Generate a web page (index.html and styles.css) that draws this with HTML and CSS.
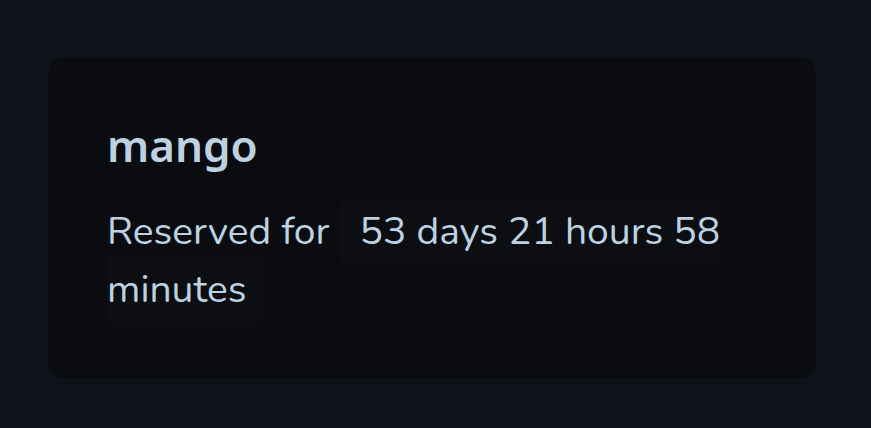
FILE: index.html
```html
<!DOCTYPE html>
<html lang="en">
<head>
    <meta charset="UTF-8">
    <meta name="viewport" content="width=device-width, initial-scale=1.0">
    <title>mango</title>
    <link rel="stylesheet" href="styles.css">
</head>
<body>
    <main class="page">
        <section class="card">
            <h1 class="card-title">mango</h1>
            <p class="card-text">Reserved for <span class="duration">53 days 21 hours 58 minutes</span></p>
        </section>
    </main>
</body>
</html>
```

FILE: styles.css
```css
*{
    box-sizing: border-box;
    margin:0;
    padding:0;
}
body{
    background:#0e1219;
    color:#bcd2e2;
    font-family: 'Nunito', sans-serif;
}
.page{
    padding:57px 48px;
}
.card{
    width:768px;
    min-height:322px;
    background:#0a0c0f;
    border-radius:18px;
    padding:62px 59px 40px;
}
.card-title{
    font-family: 'Noto Sans', sans-serif;
    font-size:44px;
    font-weight:600;
    line-height:1.2;
    margin-bottom:31px;
}
.card-text{
    font-size:39px;
    line-height:58px;
}
.duration{
    background:#0c0e12;
    border-radius:8px;
    padding:8px 20px;
}
```
